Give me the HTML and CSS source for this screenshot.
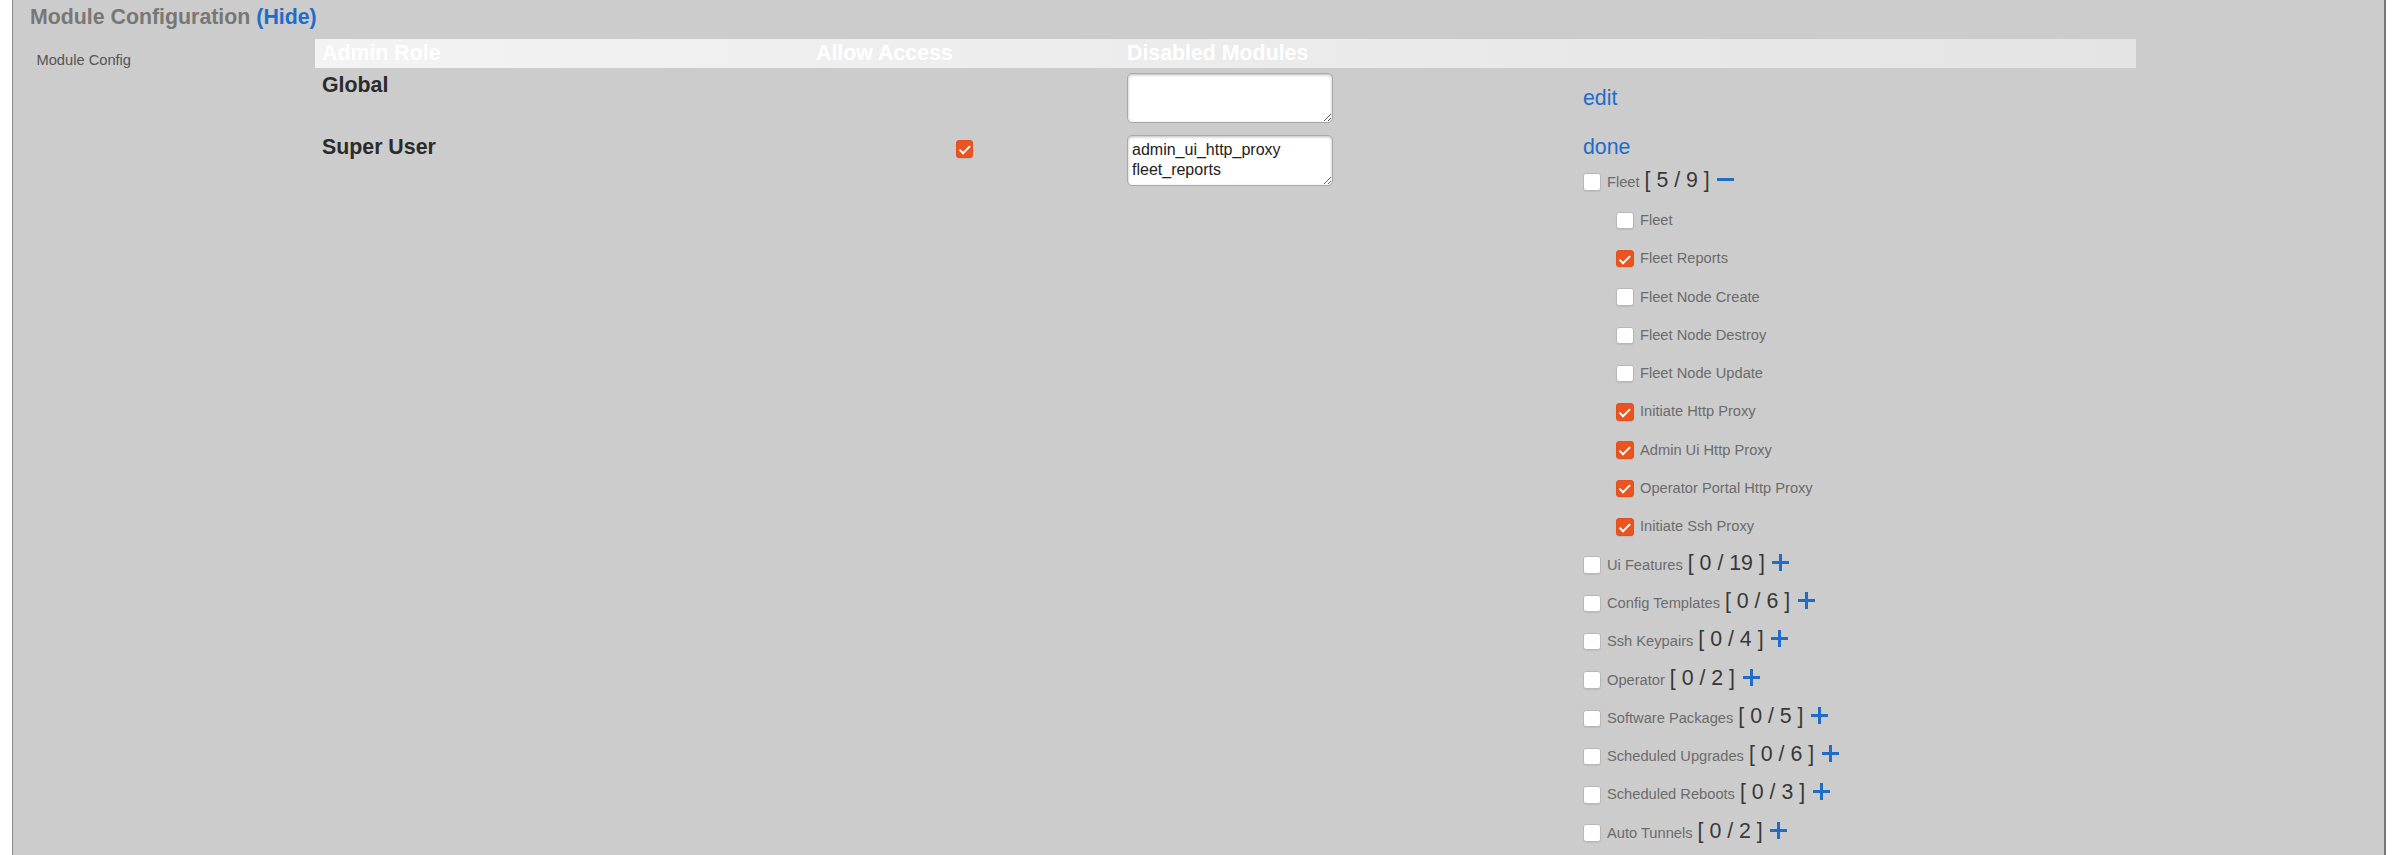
FILE: index.html
```html
<!DOCTYPE html>
<html>
<head>
<meta charset="utf-8">
<title>Module Configuration</title>
<link rel="stylesheet" href="styles.css">
</head>
<body>
<div class="panel">
  <h2 class="title">Module Configuration <a class="link" href="#">(Hide)</a></h2>
  <div class="body">
    <div class="side">Module Config</div>
    <table class="cfg">
      <colgroup><col class="c1"><col class="c2"><col class="c3"><col class="c4"></colgroup>
      <thead>
        <tr><th>Admin Role</th><th>Allow Access</th><th>Disabled Modules</th><th></th></tr>
      </thead>
      <tbody>
        <tr class="first">
          <td class="role">Global</td>
          <td class="acc"></td>
          <td class="dis"><textarea class="ta"></textarea></td>
          <td class="act mid"><a class="link" href="#">edit</a></td>
        </tr>
        <tr>
          <td class="role">Super User</td>
          <td class="acc"><input class="cb acc-cb" type="checkbox" checked></td>
          <td class="dis"><textarea class="ta ta2">admin_ui_http_proxy
fleet_reports</textarea></td>
          <td class="act">
            <a class="link" href="#">done</a>
            <ul class="mods">
              <li class="item"><input class="cb" type="checkbox"><span class="lab">Fleet<span class="cnt">[ 5 / 9 ]</span></span><svg class="ic" viewBox="0 0 17 17"><path d="M0 8.5h17"/></svg></li>
              <li class="item sub"><input class="cb" type="checkbox"><span class="lab">Fleet</span></li>
              <li class="item sub"><input class="cb" type="checkbox" checked><span class="lab">Fleet Reports</span></li>
              <li class="item sub"><input class="cb" type="checkbox"><span class="lab">Fleet Node Create</span></li>
              <li class="item sub"><input class="cb" type="checkbox"><span class="lab">Fleet Node Destroy</span></li>
              <li class="item sub"><input class="cb" type="checkbox"><span class="lab">Fleet Node Update</span></li>
              <li class="item sub"><input class="cb" type="checkbox" checked><span class="lab">Initiate Http Proxy</span></li>
              <li class="item sub"><input class="cb" type="checkbox" checked><span class="lab">Admin Ui Http Proxy</span></li>
              <li class="item sub"><input class="cb" type="checkbox" checked><span class="lab">Operator Portal Http Proxy</span></li>
              <li class="item sub"><input class="cb" type="checkbox" checked><span class="lab">Initiate Ssh Proxy</span></li>
              <li class="item"><input class="cb" type="checkbox"><span class="lab">Ui Features<span class="cnt">[ 0 / 19 ]</span></span><svg class="ic" viewBox="0 0 17 17"><path d="M8.5 0v17M0 8.5h17"/></svg></li>
              <li class="item"><input class="cb" type="checkbox"><span class="lab">Config Templates<span class="cnt">[ 0 / 6 ]</span></span><svg class="ic" viewBox="0 0 17 17"><path d="M8.5 0v17M0 8.5h17"/></svg></li>
              <li class="item"><input class="cb" type="checkbox"><span class="lab">Ssh Keypairs<span class="cnt">[ 0 / 4 ]</span></span><svg class="ic" viewBox="0 0 17 17"><path d="M8.5 0v17M0 8.5h17"/></svg></li>
              <li class="item"><input class="cb" type="checkbox"><span class="lab">Operator<span class="cnt">[ 0 / 2 ]</span></span><svg class="ic" viewBox="0 0 17 17"><path d="M8.5 0v17M0 8.5h17"/></svg></li>
              <li class="item"><input class="cb" type="checkbox"><span class="lab">Software Packages<span class="cnt">[ 0 / 5 ]</span></span><svg class="ic" viewBox="0 0 17 17"><path d="M8.5 0v17M0 8.5h17"/></svg></li>
              <li class="item"><input class="cb" type="checkbox"><span class="lab">Scheduled Upgrades<span class="cnt">[ 0 / 6 ]</span></span><svg class="ic" viewBox="0 0 17 17"><path d="M8.5 0v17M0 8.5h17"/></svg></li>
              <li class="item"><input class="cb" type="checkbox"><span class="lab">Scheduled Reboots<span class="cnt">[ 0 / 3 ]</span></span><svg class="ic" viewBox="0 0 17 17"><path d="M8.5 0v17M0 8.5h17"/></svg></li>
              <li class="item"><input class="cb" type="checkbox"><span class="lab">Auto Tunnels<span class="cnt">[ 0 / 2 ]</span></span><svg class="ic" viewBox="0 0 17 17"><path d="M8.5 0v17M0 8.5h17"/></svg></li>
            </ul>
          </td>
        </tr>
      </tbody>
    </table>
  </div>
</div>
</body>
</html>
```
FILE: styles.css
```css
html, body {
  margin: 0;
  padding: 0;
  background: #ffffff;
  font-family: "Liberation Sans", Arial, sans-serif;
  font-size: 14.67px;
}

.panel {
  margin: 0 11px 0 12px;
  min-height: 100vh;
  box-sizing: border-box;
  background: #cccccc;
  border-left: 1px solid #8a8a8a;
  border-right: 2px solid #777777;
  padding-top: 5px;
}

.title {
  margin: 0 0 9px;
  padding-left: 17px;
  font-size: 21.33px;
  font-weight: bold;
  line-height: normal;
  color: #777777;
}

.link {
  color: #1f6dc8;
  text-decoration: none;
}

.body {
  display: flex;
  align-items: flex-start;
}

.side {
  flex: none;
  width: 302px;
  box-sizing: border-box;
  padding: 13px 0 0 23.5px;
  color: #555555;
  font-size: 14.67px;
}

.cfg {
  flex: none;
  width: 1821px;
  table-layout: fixed;
  border-collapse: collapse;
  border-spacing: 0;
}

.c1 { width: 494px; }
.c2 { width: 311px; }
.c3 { width: 456px; }
.c4 { width: 560px; }

.cfg thead tr {
  background: linear-gradient(to right, #f3f3f3, #e4e4e4);
}

.cfg th {
  padding: 2px 7px;
  text-align: left;
  color: #ffffff;
  font-size: 21.33px;
  font-weight: bold;
  line-height: normal;
  white-space: nowrap;
}

.cfg td {
  padding: 5px 7px 5px;
  vertical-align: top;
}

.cfg .first td {
  padding-bottom: 6.5px;
}

.cfg td.mid {
  vertical-align: middle;
}

.role {
  font-size: 21.33px;
  font-weight: bold;
  color: #2b2b2b;
}

.acc {
  text-align: center;
}

.act {
  font-size: 21.33px;
}

.ta {
  display: block;
  box-sizing: border-box;
  width: 206px;
  height: 50px;
  margin: 0;
  padding: 4px 4px;
  border: 1px solid #a8a8a8;
  border-radius: 5px;
  background: #ffffff;
  box-shadow: inset 0 1px 3px rgba(0, 0, 0, 0.28);
  font-family: "Liberation Sans", Arial, sans-serif;
  font-size: 16px;
  line-height: 20px;
  color: #222222;
  overflow: hidden;
}

.ta2 {
  height: 51px;
}

.cb {
  -webkit-appearance: none;
  appearance: none;
  flex: none;
  position: relative;
  width: 17.5px;
  height: 17.5px;
  margin: 0;
  box-sizing: border-box;
  border: 1px solid #b8b8b8;
  border-radius: 3px;
  background: #ffffff;
  box-shadow: 0 1px 1px rgba(0, 0, 0, 0.08);
}

.cb:checked {
  background: #e95420;
  border-color: #e2501e;
}

.cb:checked::after {
  content: "";
  position: absolute;
  left: 5.2px;
  top: 1.6px;
  width: 3.6px;
  height: 8.6px;
  border: solid #ffffff;
  border-width: 0 2.4px 2.4px 0;
  transform: rotate(45deg);
}

.acc-cb {
  display: block;
  margin: 5.5px auto 0;
}

.mods {
  list-style: none;
  margin: 3.5px 0 0;
  padding: 0;
}

.item {
  display: flex;
  align-items: center;
  height: 38.3px;
}

.item.sub {
  padding-left: 33px;
}

.lab {
  margin-left: 6.5px;
  font-size: 14.67px;
  line-height: 17px;
  color: #6b6b6b;
  white-space: nowrap;
}

.cnt {
  margin-left: 5px;
  font-size: 21.33px;
  line-height: 0;
  color: #383838;
}

.ic {
  flex: none;
  width: 17px;
  height: 17px;
  margin: 0 0 6px 7.5px;
  stroke: #1f6dc8;
  stroke-width: 3;
  fill: none;
}
```
